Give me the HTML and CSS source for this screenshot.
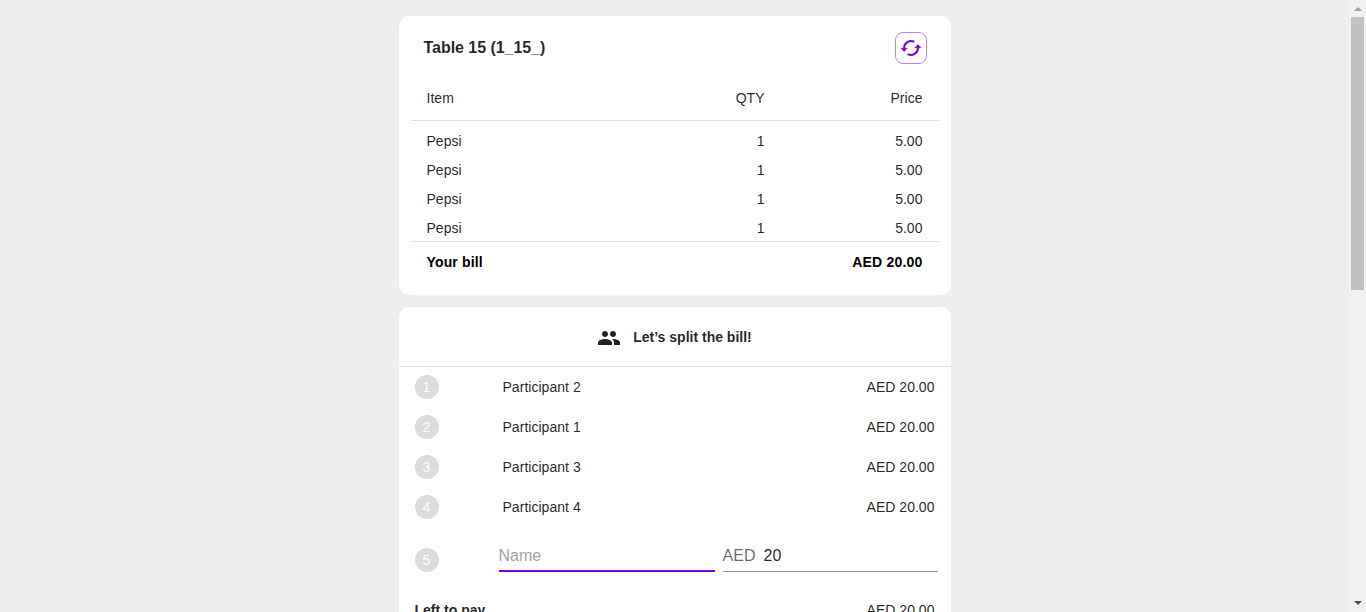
FILE: index.html
```html
<!DOCTYPE html>
<html lang="en">
<head>
<meta charset="utf-8">
<title>Table 15</title>
<link rel="stylesheet" href="styles.css">
</head>
<body>
<div class="layout">
  <main class="page">
    <section class="card bill">
      <header class="bill-head">
        <h1 class="title">Table 15 (1_15_)</h1>
        <button class="refresh" aria-label="Refresh">
          <svg width="24" height="24" viewBox="0 0 24 24" fill="none" stroke="currentColor" stroke-width="2">
            <path d="M5.100 13V12A6.900 6.900 0 0 1 15.300 5.900M18.900 11V12A6.900 6.900 0 0 1 8.700 18.100"/>
            <path d="M1.900 12.200H8.300L5.100 15.600ZM15.700 11.800H22.100L18.900 8.400Z" fill="currentColor" stroke="currentColor" stroke-width=".4"/>
          </svg>
        </button>
      </header>
      <div class="items">
        <div class="row columns"><span>Item</span><span class="num">QTY</span><span class="num">Price</span></div>
        <div class="row"><span>Pepsi</span><span class="num">1</span><span class="num">5.00</span></div>
        <div class="row"><span>Pepsi</span><span class="num">1</span><span class="num">5.00</span></div>
        <div class="row"><span>Pepsi</span><span class="num">1</span><span class="num">5.00</span></div>
        <div class="row last"><span>Pepsi</span><span class="num">1</span><span class="num">5.00</span></div>
        <div class="total"><span>Your bill</span><span class="sum">AED 20.00</span></div>
      </div>
    </section>
    <section class="card split">
      <header class="split-head">
        <svg class="people" width="24" height="24" viewBox="0 0 24 24" fill="currentColor">
          <path d="M16 11c1.66 0 2.99-1.34 2.99-3S17.66 5 16 5s-3 1.34-3 3 1.34 3 3 3zm-8 0c1.66 0 2.99-1.34 2.99-3S9.66 5 8 5 5 6.34 5 8s1.34 3 3 3zm0 2c-2.33 0-7 1.17-7 3.5V19h14v-2.500c0-2.330-4.670-3.500-7-3.500zm8 0c-.29 0-.62.020-.97.050 1.160.840 1.970 1.970 1.970 3.450V19h6v-2.500c0-2.330-4.670-3.500-7-3.500z"/>
        </svg>
        <h2 class="split-title">Let’s split the bill!</h2>
      </header>
      <div class="person"><span class="badge">1</span><span>Participant 2</span><span class="num">AED 20.00</span></div>
      <div class="person"><span class="badge">2</span><span>Participant 1</span><span class="num">AED 20.00</span></div>
      <div class="person"><span class="badge">3</span><span>Participant 3</span><span class="num">AED 20.00</span></div>
      <div class="person"><span class="badge">4</span><span>Participant 4</span><span class="num">AED 20.00</span></div>
      <div class="entry">
        <span class="badge">5</span>
        <div class="field active"><span class="placeholder">Name</span></div>
        <div class="field"><span class="prefix">AED</span><span>20</span></div>
      </div>
      <div class="left"><b class="left-label">Left to pay</b><span>AED 20.00</span></div>
    </section>
  </main>
  <div class="scrollbar">
    <svg class="arrow up" width="8" height="4" viewBox="0 0 8 4"><path d="M0 4L4 0L8 4Z" fill="currentColor"/></svg>
    <div class="thumb"></div>
    <svg class="arrow down" width="8" height="4" viewBox="0 0 8 4"><path d="M0 0L4 4L8 0Z" fill="currentColor"/></svg>
  </div>
</div>
</body>
</html>
```

FILE: styles.css
```css
* { box-sizing: border-box; }
body {
  margin: 0;
  background: #efefef;
  color: rgba(0, 0, 0, .87);
  font: 14px/20px "Liberation Sans", Arial, sans-serif;
  letter-spacing: .03px;
}
.layout { display: flex; height: 612px; overflow: hidden; }
.page {
  flex: 1;
  display: flex;
  flex-direction: column;
  align-items: center;
  gap: 12px;
  padding-top: 16px;
}
.card { width: 552px; flex: none; background: #fff; border-radius: 10px; }
.bill { height: 279px; padding: 16px 12px 0; }
.bill-head { display: flex; justify-content: space-between; padding: 0 12px 0 13px; height: 60px; }
.title { margin: 0; font-size: 16px; line-height: 32px; letter-spacing: -.04px; }
.refresh {
  display: grid;
  place-items: center;
  width: 32px;
  height: 32px;
  padding: 0;
  border: 1px solid #bd80eb;
  border-radius: 8px;
  background: #fff;
  color: #7b00d7;
}
.row {
  display: grid;
  grid-template-columns: 200px 138px 1fr;
  height: 29px;
  padding: 4px 16px 0;
}
.columns {
  height: 33px;
  margin: -4px 0 6px;
  padding-top: 0;
  border-bottom: 1px solid #e0e0e0;
}
.last { height: 27px; }
.num { text-align: right; }
.total {
  display: flex;
  justify-content: space-between;
  height: 42px;
  padding: 10px 16px;
  border-top: 1px solid #e0e0e0;
  color: #000;
  font-weight: 700;
  letter-spacing: .15px;
}
.sum { letter-spacing: .2px; }
.split { height: 380px; }
.split-head {
  display: flex;
  justify-content: center;
  align-items: center;
  gap: 12px;
  height: 60px;
  border-bottom: 1px solid #e0e0e0;
}
.people { margin-top: 2px; }
.split-title { margin: 0; font-size: 14px; line-height: 20px; letter-spacing: 0; }
.person {
  display: grid;
  grid-template-columns: 88px 1fr 1fr;
  align-items: center;
  height: 40px;
  padding: 0 16px;
}
.badge {
  width: 24px;
  height: 24px;
  border-radius: 50%;
  background: #dcdcdc;
  color: #fff;
  text-align: center;
  line-height: 24px;
}
.entry {
  display: grid;
  grid-template-columns: 76px 216px 215px;
  column-gap: 8px;
  padding: 13px 13px 0 16px;
  height: 66px;
}
.entry .badge { margin-top: 8px; }
.field {
  display: flex;
  gap: 8px;
  height: 32px;
  padding-top: 4px;
  border-bottom: 1px solid #949494;
  font-size: 16px;
  line-height: 23px;
}
.field.active { border-bottom: 2px solid #7b00d7; }
.placeholder { color: #a3a3a3; }
.prefix { color: rgba(0, 0, 0, .6); }
.left { display: flex; justify-content: space-between; padding: 7px 16px; }
.left-label { letter-spacing: 0; }
.scrollbar {
  display: flex;
  flex-direction: column;
  align-items: center;
  width: 17px;
  height: 612px;
  padding: 7px 0;
  background: #f1f1f1;
}
.thumb { width: 13px; height: 273px; margin-top: 6px; background: #c1c1c1; }
.arrow { flex: none; }
.up { color: #a3a3a3; }
.down { margin-top: auto; color: #505050; }
```
